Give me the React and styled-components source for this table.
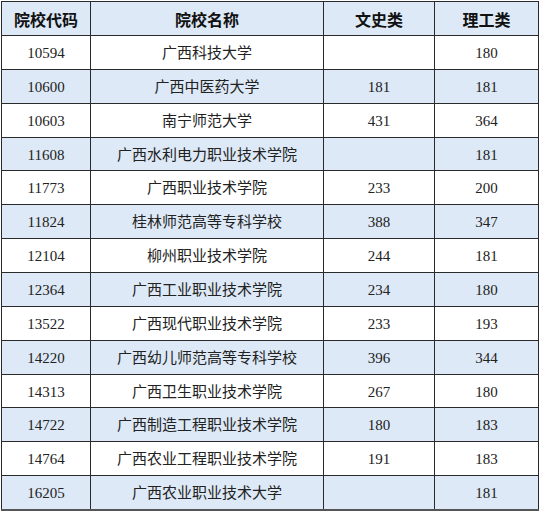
import React from 'react';
import styled, {createGlobalStyle} from "styled-components";

const Global = createGlobalStyle`
body {
  margin: 0;
  background: #fff;
}
`

const Wrap = styled.div`
padding: 1px 0 0 1px;
`

const Table = styled.table`
border-collapse: collapse;
table-layout: fixed;
width: 537px;
border: 1px solid #2a2a2a;
border-bottom: 2px solid #555;
`

const Head = styled.th`
height: 33px;
padding: 0;
line-height: 20px;
background: #dde9f6;
border: 1px solid #2a2a2a;
font-family: "Noto Sans CJK SC", sans-serif;
font-weight: 700;
font-size: 16px;
color: #111;
text-align: center;
`

const Row = styled.tr`
height: 33.86px;
background: ${({blue}) => blue ? "#dde9f6" : "#fff"};
`

const Cell = styled.td`
padding: 1px 0 0;
line-height: 20px;
border: 1px solid #2a2a2a;
font-family: "Liberation Serif", "Noto Sans CJK SC", serif;
font-size: 15px;
color: #222;
text-align: center;
`

const rows = [
    ["10594", "广西科技大学", "", "180"],
    ["10600", "广西中医药大学", "181", "181"],
    ["10603", "南宁师范大学", "431", "364"],
    ["11608", "广西水利电力职业技术学院", "", "181"],
    ["11773", "广西职业技术学院", "233", "200"],
    ["11824", "桂林师范高等专科学校", "388", "347"],
    ["12104", "柳州职业技术学院", "244", "181"],
    ["12364", "广西工业职业技术学院", "234", "180"],
    ["13522", "广西现代职业技术学院", "233", "193"],
    ["14220", "广西幼儿师范高等专科学校", "396", "344"],
    ["14313", "广西卫生职业技术学院", "267", "180"],
    ["14722", "广西制造工程职业技术学院", "180", "183"],
    ["14764", "广西农业工程职业技术学院", "191", "183"],
    ["16205", "广西农业职业技术大学", "", "181"],
]

const App = () => {
    return (
        <>
            <Global/>
            <Wrap>
                <Table>
                    <colgroup>
                        <col style={{width: 89}}/>
                        <col style={{width: 233}}/>
                        <col style={{width: 111}}/>
                        <col style={{width: 104}}/>
                    </colgroup>
                    <thead>
                        <tr>
                            <Head>院校代码</Head>
                            <Head>院校名称</Head>
                            <Head>文史类</Head>
                            <Head>理工类</Head>
                        </tr>
                    </thead>
                    <tbody>
                        {rows.map((r, i) => (
                            <Row key={r[0]} blue={i % 2 === 1}>
                                {r.map((c, j) => <Cell key={j}>{c}</Cell>)}
                            </Row>
                        ))}
                    </tbody>
                </Table>
            </Wrap>
        </>
    );
};

export default App;
